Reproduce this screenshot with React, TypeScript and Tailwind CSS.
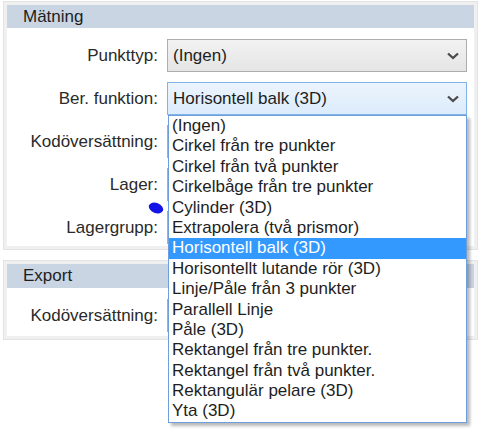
import React from "react";

const items = [
  "(Ingen)",
  "Cirkel från tre punkter",
  "Cirkel från två punkter",
  "Cirkelbåge från tre punkter",
  "Cylinder (3D)",
  "Extrapolera (två prismor)",
  "Horisontell balk (3D)",
  "Horisontellt lutande rör (3D)",
  "Linje/Påle från 3 punkter",
  "Parallell Linje",
  "Påle (3D)",
  "Rektangel från tre punkter.",
  "Rektangel från två punkter.",
  "Rektangulär pelare (3D)",
  "Yta (3D)",
];

function Chevron() {
  return (
    <svg width="12" height="8" viewBox="0 0 12 8" className="shrink-0">
      <polyline points="1,1.5 6,6 11,1.5" fill="none" stroke="#4a4a4a" strokeWidth="2.3" />
    </svg>
  );
}

function Select({ value, active }: { value?: string; active?: boolean }) {
  return (
    <div
      className={
        active
          ? "ml-[9px] w-[300px] h-[33px] border border-[#7eb4ea] bg-gradient-to-b from-[#ecf4fc] to-[#dcecfc] flex items-center pl-[5px] pr-[7px]"
          : "ml-[9px] w-[300px] h-[33px] border border-[#adadad] bg-gradient-to-b from-[#f2f2f2] to-[#e5e5e5] flex items-center pl-[5px] pr-[7px]"
      }
    >
      <span className="flex-1 text-[#1e1e1e] whitespace-nowrap">{value}</span>
      <Chevron />
    </div>
  );
}

function Row({ label, value, active }: { label: string; value?: string; active?: boolean }) {
  return (
    <div className="flex items-center h-[33px]">
      <div className="w-[151px] text-right text-[#2a2a2a] whitespace-nowrap">{label}</div>
      <Select value={value} active={active} />
    </div>
  );
}

export default function App() {
  return (
    <div
      className="relative w-[496px] h-[445px] bg-white overflow-hidden text-[17px]"
      style={{ fontFamily: '"Liberation Sans", Arial, sans-serif' }}
    >
      <div className="ml-[3px] mt-[1px] w-[475px]">
        <div className="border border-[#e3e3e3] bg-[#f0f0f0] p-[3px]">
          <div className="h-[23px] bg-[#c9d5e2] pl-[16px] flex items-center text-[#1e1e1e]">Mätning</div>
          <div className="bg-white pt-[11px] pb-[2px] flex flex-col gap-[10px]">
            <Row label="Punkttyp:" value="(Ingen)" />
            <Row label="Ber. funktion:" value="Horisontell balk (3D)" active />
            <Row label="Kodöversättning:" />
            <Row label="Lager:" />
            <Row label="Lagergrupp:" />
          </div>
        </div>
        <div className="mt-[10px] border border-[#e3e3e3] bg-[#f0f0f0] p-[3px]">
          <div className="h-[24px] bg-[#c9d5e2] pl-[16px] flex items-center text-[#1e1e1e]">Export</div>
          <div className="bg-white pt-[11px] pb-[4px] flex flex-col">
            <Row label="Kodöversättning:" />
          </div>
        </div>
      </div>

      <div className="absolute left-[168px] top-[115px] w-[299px] border border-[#6c9fdc] bg-white shadow-[3px_3px_3px_rgba(0,0,0,0.28)]">
        {items.map((t) => (
          <div
            key={t}
            className={
              t === "Horisontell balk (3D)"
                ? "h-[20.4px] leading-[20.4px] pl-[3px] bg-[#3399ff] text-white whitespace-nowrap"
                : "h-[20.4px] leading-[20.4px] pl-[3px] text-[#1e1e1e] whitespace-nowrap"
            }
          >
            {t}
          </div>
        ))}
      </div>

      <svg className="absolute left-[147px] top-[201px]" width="18" height="14" viewBox="0 0 18 14">
        <ellipse cx="9" cy="7" rx="7.5" ry="5" transform="rotate(22 9 7)" fill="#1414e6" />
      </svg>
    </div>
  );
}
